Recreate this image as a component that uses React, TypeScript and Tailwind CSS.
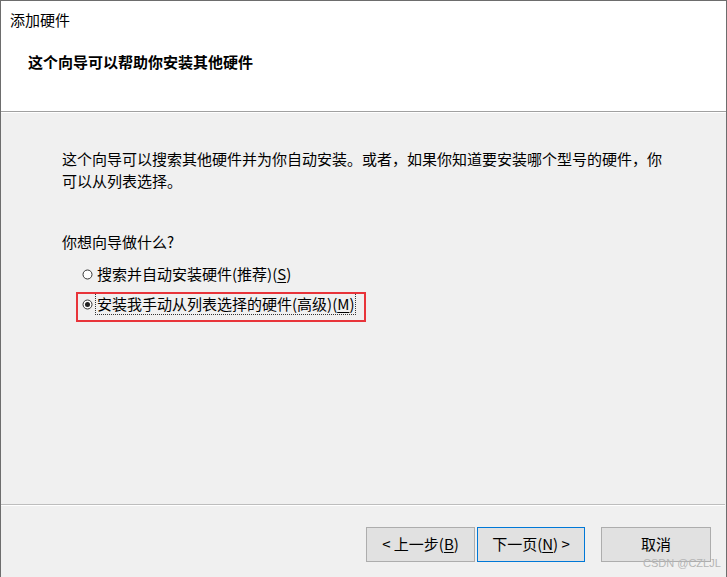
const font = { fontFamily: '"Noto Sans CJK SC", "Microsoft YaHei UI", sans-serif' };

function Radio({ checked }: { checked?: boolean }) {
  return (
    <svg width="11" height="11" viewBox="0 0 11 11" className="shrink-0">
      <circle cx="5.5" cy="5.5" r="4.5" fill="#fff" stroke="#333" strokeWidth="1" />
      {checked && <circle cx="5.5" cy="5.5" r="2.5" fill="#222" />}
    </svg>
  );
}

function WinButton({ children, focused }: { children: React.ReactNode; focused?: boolean }) {
  return (
    <button
      className={
        focused
          ? 'w-full h-[35px] bg-[#e1e1e1] border border-[#0078d7] text-[15px] text-black flex items-center justify-center'
          : 'w-full h-[35px] bg-[#e1e1e1] border border-[#adadad] text-[15px] text-black flex items-center justify-center'
      }
    >
      {children}
    </button>
  );
}

export default function App() {
  return (
    <div
      className="w-[727px] h-[577px] bg-[#f0f0f0] border-l border-t border-r border-[#6d6d6d] flex flex-col text-black overflow-hidden"
      style={font}
    >
      {/* Header */}
      <div className="h-[110px] bg-white shrink-0">
        <div className="pl-[9px] pt-[8px] text-[15px] leading-[22px]">添加硬件</div>
        <div className="pl-[27px] mt-[20px] text-[15px] leading-[22px] font-bold">这个向导可以帮助你安装其他硬件</div>
      </div>
      <div className="h-[2px] border-t border-[#a0a0a0] bg-white shrink-0" />

      {/* Body */}
      <div className="flex-1 pl-[61px] pt-[35px]">
        <p className="text-[15px] leading-[22px] w-[610px]">
          这个向导可以搜索其他硬件并为你自动安装。或者，如果你知道要安装哪个型号的硬件，你可以从列表选择。
        </p>
        <p className="text-[15px] leading-[22px] mt-[39px]">你想向导做什么?</p>
        <div className="mt-[6px] pl-[20px] flex flex-col">
          <label className="h-[30px] flex items-center gap-[4px] text-[15px]">
            <Radio />
            <span>
              搜索并自动安装硬件(推荐)(<span className="underline underline-offset-2">S</span>)
            </span>
          </label>
          <label className="relative h-[30px] flex items-center gap-[3px] text-[15px]">
            <Radio checked />
            <span className="outline outline-1 outline-dotted outline-[#333] leading-[20px] px-[1px]">
              安装我手动从列表选择的硬件(高级)(<span className="underline underline-offset-2">M</span>)
            </span>
            <div className="absolute left-[-6px] top-[3px] w-[290px] h-[30px] border-2 border-[#e8343a]" />
          </label>
        </div>
      </div>

      {/* Footer */}
      <div className="h-[2px] border-t border-[#bdbdbd] bg-white mr-[1px] shrink-0" />
      <div className="relative h-[71px] shrink-0 pt-[21px] flex">
        <div className="ml-[365px] flex gap-[2px]">
          <div className="w-[109px]">
            <WinButton>
              <span>
                &lt; 上一步(<span className="underline underline-offset-2">B</span>)
              </span>
            </WinButton>
          </div>
          <div className="w-[108px]">
            <WinButton focused>
              <span>
                下一页(<span className="underline underline-offset-2">N</span>) &gt;
              </span>
            </WinButton>
          </div>
        </div>
        <div className="ml-[16px] w-[110px]">
          <WinButton>
            <span>取消</span>
          </WinButton>
        </div>
        <div
          className="absolute left-[642px] top-[50px] text-[11px] leading-[14px] text-[#b5b5b5]"
          style={{ fontFamily: '"Liberation Sans", Arial, sans-serif' }}
        >
          CSDN @CZLJL
        </div>
      </div>
    </div>
  );
}
